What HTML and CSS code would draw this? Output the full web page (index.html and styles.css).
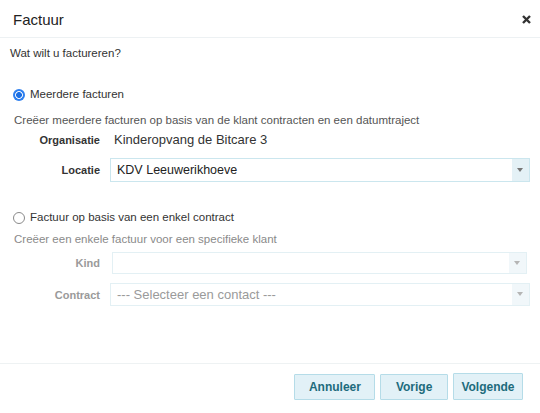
FILE: index.html
```html
<!DOCTYPE html>
<html lang="nl">
<head>
<meta charset="utf-8">
<title>Factuur</title>
<link rel="stylesheet" href="styles.css">
</head>
<body>
<div class="modal">
  <header class="modal-header">
    <h1 class="modal-title">Factuur</h1>
    <button class="close" aria-label="Sluiten">
      <svg width="9" height="9" viewBox="0 0 9 9"><path d="M1 1 L8 8 M8 1 L1 8" stroke="#333" stroke-width="2.4" stroke-linecap="butt"/></svg>
    </button>
  </header>
  <main class="modal-body">
    <p class="question">Wat wilt u factureren?</p>

    <label class="radio-line first">
      <span class="radio checked"></span>
      <span>Meerdere facturen</span>
    </label>
    <p class="hint">Creëer meerdere facturen op basis van de klant contracten en een datumtraject</p>
    <div class="form-row org-row">
      <span class="label">Organisatie</span>
      <span class="value">Kinderopvang de Bitcare 3</span>
    </div>
    <div class="form-row">
      <span class="label">Locatie</span>
      <div class="select">
        <span class="select-text">KDV Leeuwerikhoeve</span>
        <span class="select-arrow"></span>
      </div>
    </div>

    <label class="radio-line second">
      <span class="radio"></span>
      <span>Factuur op basis van een enkel contract</span>
    </label>
    <p class="hint muted">Creëer een enkele factuur voor een specifieke klant</p>
    <div class="form-row disabled kind-row">
      <span class="label">Kind</span>
      <div class="select small">
        <span class="select-text"></span>
        <span class="select-arrow"></span>
      </div>
    </div>
    <div class="form-row disabled contract-row">
      <span class="label">Contract</span>
      <div class="select">
        <span class="select-text">--- Selecteer een contact ---</span>
        <span class="select-arrow"></span>
      </div>
    </div>
  </main>
  <footer class="modal-footer">
    <button class="btn">Annuleer</button>
    <button class="btn btn-prev">Vorige</button>
    <button class="btn btn-next">Volgende</button>
  </footer>
</div>
</body>
</html>
```
FILE: styles.css
```css
html, body {
  margin: 0;
  padding: 0;
  background: #fff;
}
body {
  font-family: "Liberation Sans", Arial, sans-serif;
  color: #333;
  font-size: 11.5px;
  width: 540px;
  height: 413px;
  overflow: hidden;
}
.modal {
  display: flex;
  flex-direction: column;
  height: 413px;
}
.modal-header {
  height: 37px;
  border-bottom: 1px solid #edf1f3;
  display: flex;
  align-items: center;
  justify-content: space-between;
  padding: 0 9px 0 13px;
  box-sizing: content-box;
}
.modal-title {
  margin: 0;
  font-size: 15px;
  font-weight: normal;
  color: #222;
  padding-top: 1px;
}
.close {
  border: 0;
  background: none;
  padding: 0;
  width: 9px;
  height: 9px;
  display: flex;
  margin-top: 2px;
}
.modal-body {
  flex: 1;
  padding: 8px 10px 0 10px;
}
.question {
  margin: 0;
  line-height: 15px;
}
.radio-line {
  display: flex;
  align-items: center;
  gap: 5px;
  line-height: 15px;
  padding-left: 3px;
}
.radio-line.first { margin-top: 26px; }
.radio-line.second { margin-top: 28px; }
.radio {
  width: 12px;
  height: 12px;
  border-radius: 50%;
  box-sizing: border-box;
  border: 1px solid #8a8a8a;
  background: #fff;
  flex: none;
}
.radio.checked {
  border: 0;
  background: radial-gradient(circle, #1c6fe3 0 2.6px, #e9f1fd 3.2px 3.6px, #2f80ef 4.3px);
}
.hint {
  margin: 11px 0 0 4px;
  line-height: 15px;
  color: #555;
}
.hint.muted {
  margin-top: 7px;
  color: #8a8a8a;
}
.form-row {
  display: grid;
  grid-template-columns: 90px 1fr;
  column-gap: 10px;
  align-items: center;
}
.org-row {
  margin-top: 4px;
  height: 15px;
}
.org-row + .form-row { margin-top: 11px; }
.label {
  text-align: right;
  font-weight: bold;
  font-size: 11px;
  color: #333;
}
.value {
  font-size: 13px;
  color: #333;
  padding-left: 4px;
}
.select {
  height: 24px;
  border: 1px solid #cbe6ee;
  box-sizing: border-box;
  display: flex;
  align-items: stretch;
  background: #fff;
}
.select-text {
  flex: 1;
  display: flex;
  align-items: center;
  padding-left: 6px;
  font-size: 12.5px;
  color: #222;
}
.select-arrow {
  width: 17px;
  background: #e4f1f6;
  position: relative;
}
.select-arrow::after {
  content: "";
  position: absolute;
  left: 5px;
  top: 9px;
  border-left: 3.5px solid transparent;
  border-right: 3.5px solid transparent;
  border-top: 4px solid #777;
}
.disabled .label { color: #9a9a9a; }
.disabled .select {
  border-color: #e3f0f4;
}
.disabled .select-text { color: #9a9a9a; font-size: 13px; }
.disabled .select-arrow { background: #f1f7fa; }
.disabled .select-arrow::after { border-top-color: #b5b5b5; top: 8px; }
.kind-row { margin-top: 5px; }
.kind-row .select {
  height: 22px;
  margin-left: 2px;
  margin-right: 3px;
}
.contract-row { margin-top: 9px; }
.contract-row .select { height: 23px; }
.modal-footer {
  border-top: 1px solid #eef2f3;
  display: flex;
  justify-content: flex-end;
  align-items: flex-start;
  gap: 5px;
  padding: 10px 17px 0 0;
  height: 39px;
}
.btn {
  font-family: "Liberation Sans", Arial, sans-serif;
  font-weight: bold;
  font-size: 12px;
  color: #1d6b7c;
  background: #e2f1f7;
  border: 1px solid #b5dce8;
  height: 26px;
  padding: 0 13.5px;
  border-radius: 1px;
}
.btn-prev {
  padding: 0 14.5px;
}
.btn-next {
  padding: 0 7.5px;
  height: 27px;
  margin-top: -1px;
}
```
